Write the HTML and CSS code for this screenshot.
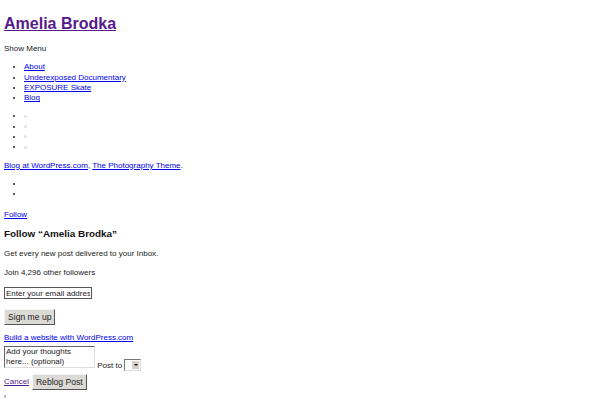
FILE: index.html
```html
<!DOCTYPE html>
<html lang="en">
<head>
  <meta charset="UTF-8">
  <title>Amelia Brodka</title>
  <link rel="stylesheet" href="styles.css">
</head>
<body>
  <!-- Cabeçalho -->
  <h1 class="site-title"><a href="#">Amelia Brodka</a></h1>
  <div class="menu-toggle">Show Menu</div>

  <ul class="menu">
    <li><a href="#">About</a></li>
    <li><a href="#">Underexposed Documentary</a></li>
    <li><a href="#">EXPOSURE Skate</a></li>
    <li><a href="#">Blog</a></li>
  </ul>

  <ul class="social">
    <li><span class="dot"></span></li>
    <li><span class="dot"></span></li>
    <li><span class="dot"></span></li>
    <li><span class="dot"></span></li>
  </ul>

  <!-- Rodapé -->
  <p class="credits"><a href="#">Blog at WordPress.com</a>, <a href="#">The Photography Theme</a>.</p>

  <ul class="empty">
    <li></li>
    <li></li>
  </ul>

  <a class="follow-link" href="#">Follow</a>

  <!-- Follow -->
  <div class="follow-box">
    <h3>Follow “Amelia Brodka”</h3>
    <p>Get every new post delivered to your Inbox.</p>
    <p>Join 4,296 other followers</p>
    <input class="email" type="text" placeholder="Enter your email address">
    <button class="btn signup">Sign me up</button>
    <a class="build" href="#">Build a website with WordPress.com</a>
  </div>

  <!-- Reblog -->
  <div class="reblog">
    <div class="reblog-row"><textarea class="thoughts" placeholder="Add your thoughts here... (optional)"></textarea> Post to <span class="select"><span class="arrow"></span></span></div>
    <div class="reblog-actions">
      <a class="cancel" href="#">Cancel</a>
      <button class="btn">Reblog Post</button>
    </div>
  </div>

  <div class="tiny"></div>
</body>
</html>
```

FILE: styles.css
```css
body {
  font-family: "Liberation Sans", Arial, sans-serif;
  font-size: 8px;
  line-height: 10.3px;
  color: #222;
  margin: 4px;
  background: #fff;
}

a {
  color: #0000ee;
}

.site-title {
  font-size: 16px;
  line-height: 18px;
  margin: 11px 0;
}

.site-title a {
  color: #551a8b;
}

.menu-toggle {
  margin-top: 1px;
}

ul {
  margin: 8px 0;
  padding-left: 20px;
}

.social li {
  height: 10.3px;
}

.dot {
  display: inline-block;
  width: 3px;
  height: 3px;
  border-radius: 50%;
  background: #e0e0e0;
  vertical-align: middle;
}

.credits {
  margin: 8px 0;
}

.empty li {
  height: 10.3px;
}

.follow-link {
  display: block;
  width: max-content;
  margin-top: 10px;
}

.follow-box h3 {
  font-size: 9.9px;
  line-height: 12px;
  margin: 8px 0;
  color: #111;
}

.follow-box p {
  margin: 9px 0;
}

.email {
  display: block;
  width: 88px;
  height: 12px;
  box-sizing: border-box;
  padding: 0 1px;
  margin: 0 0 10px;
  border: 1px solid #555;
  font-family: inherit;
  font-size: 8px;
  color: #222;
}

.email::placeholder {
  color: #222;
}

.btn {
  font-family: inherit;
  font-size: 8.6px;
  height: 16px;
  padding: 0 3px;
  background: #dcdad5;
  border: 1px solid;
  border-color: #f4f4f4 #555 #555 #f4f4f4;
  color: #222;
}

.signup {
  display: block;
}

.build {
  display: inline-block;
  margin-top: 8px;
}

.reblog-row {
  margin-top: 2px;
  line-height: 10px;
}

.thoughts {
  display: inline-block;
  vertical-align: baseline;
  width: 91px;
  height: 22px;
  box-sizing: border-box;
  padding: 0 1px;
  margin: 0;
  border: 1px solid;
  border-color: #666 #ddd #ddd #666;
  font-family: inherit;
  font-size: 8px;
  line-height: 10px;
  resize: none;
  overflow: hidden;
}

.thoughts::placeholder {
  color: #222;
}

.select {
  display: inline-block;
  vertical-align: -3px;
  width: 17px;
  height: 12px;
  box-sizing: border-box;
  border: 1px solid;
  border-color: #777 #ddd #ddd #777;
  position: relative;
}

.arrow {
  position: absolute;
  right: 1px;
  top: 1px;
  width: 7px;
  height: 8px;
  background: #d4d0c8;
}

.arrow::after {
  content: "";
  position: absolute;
  left: 2px;
  top: 3px;
  border: 2px solid transparent;
  border-top-color: #000;
  border-bottom: 0;
}

.reblog-actions {
  display: flex;
  align-items: center;
  gap: 3px;
  margin-top: 3px;
}

.cancel {
  color: #551a8b;
}

.tiny {
  width: 2px;
  height: 3px;
  background: #bbb;
  margin-top: 5px;
}
```
